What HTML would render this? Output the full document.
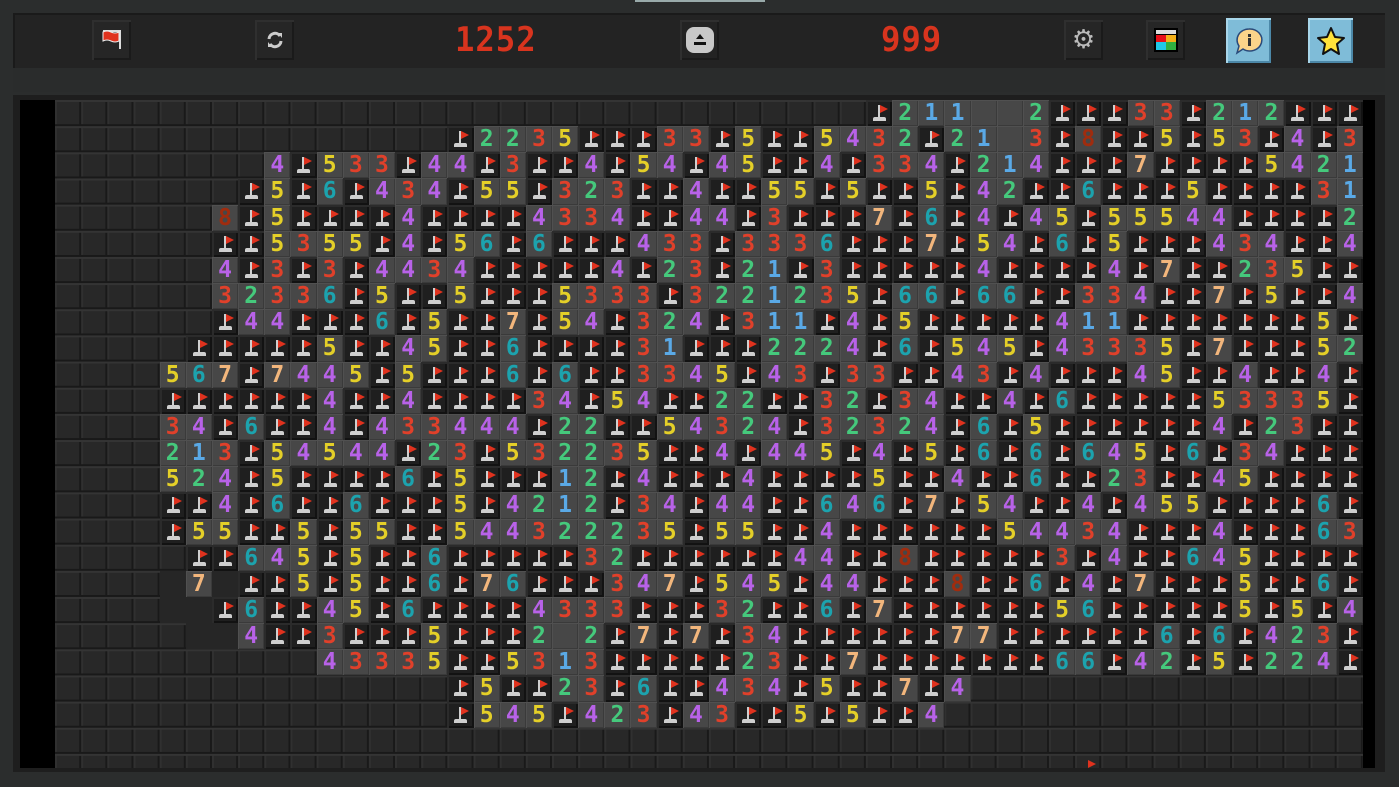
<!DOCTYPE html>
<html><head><meta charset="utf-8"><style>
*{margin:0;padding:0;box-sizing:border-box}
html,body{width:1399px;height:787px;overflow:hidden;background:#2b2d2d;font-family:"Liberation Sans",sans-serif}
.tab{position:absolute;left:635px;top:0;width:130px;height:2px;background:#9aa;}
.tool{position:absolute;left:13px;top:13px;width:1372px;height:55px;background:#232323;border-top:2px solid #1a1a1a;border-left:2px solid #1a1a1a}
.band{position:absolute;left:13px;top:68px;width:1372px;height:24px;background:#2a2c2c}
.btn{position:absolute;top:20px;width:39px;height:40px;background:#262626;box-shadow:inset 2px 2px 0 #2f2f2f,inset -2px -2px 0 #1a1a1a;display:flex;align-items:center;justify-content:center}
.seg{position:absolute;top:20px;height:40px;font-family:"DejaVu Sans Mono",monospace;font-weight:bold;font-size:34px;line-height:40px;color:#d8341e;letter-spacing:1px;transform:scaleX(.95);transform-origin:left}
.panel{position:absolute;left:13px;top:95px;width:1372px;height:677px;background:#1e1e1e}
.blk{position:absolute;left:20px;top:100px;width:35px;height:668px;background:#000}
.blk2{position:absolute;left:1363px;top:100px;width:12px;height:668px;background:#000}
#g{position:absolute;left:55px;top:100px;width:1308px;height:668px;overflow:hidden;
background:linear-gradient(to bottom,#343434 0 2px,transparent 2px 24.16px,#191919 24.16px),linear-gradient(to right,#303030 0 2px,#282828 2px 24.16px,#191919 24.16px);background-size:26.16px 26.16px}
r{display:flex;height:26.16px}
f,e,z,k1,k2,k3,k4,k5,k6,k7,k8{display:block;flex:0 0 26.16px;height:26.16px;position:relative}
f{background:linear-gradient(#cfcfcf,#cfcfcf) 12px 5px/2px 13px no-repeat,#1f1f1f;box-shadow:inset 2px 2px 0 #2b2b2b,inset -2px -2px 0 #121212}
f:before{content:"";position:absolute;left:14px;top:5px;border-left:8px solid #e0321e;border-top:4px solid transparent;border-bottom:4px solid transparent}
f:after{content:"";position:absolute;left:7px;top:17px;width:13px;height:4px;background:#cfcfcf;border-radius:2px 2px 0 0}
e{background:#474747;box-shadow:inset 1px 1px 0 #505050,inset -1px -1px 0 #3a3a3a}
z{background:#262626}
k1,k2,k3,k4,k5,k6,k7,k8{background:#474747;box-shadow:inset 1px 1px 0 #505050,inset -1px -1px 0 #3a3a3a;font-family:"DejaVu Sans Mono",monospace;font-weight:bold;font-size:23px;line-height:26px;text-align:center}
k1,k2,k3,k4,k5,k6,k7,k8{display:flex;justify-content:center}
k1{color:#5aa9e6}k2{color:#45c97c}k3{color:#e0402a}k4{color:#b862e8}k5{color:#e4cf28}k6{color:#1ca3ae}k7{color:#f2b67c}k8{color:#a02c0e}
</style></head><body>
<div class="tab"></div>
<div class="tool"></div>
<div class="band"></div>
<div class="btn" style="left:92px"><svg width="24" height="24" viewBox="0 0 24 24"><path d="M3 3h17v18" fill="none" stroke="#ddd" stroke-width="2"/><path d="M3 4q4-2 8 0t8 0v9q-4 2-8 0t-8 0z" fill="#e0321e" stroke="#eee" stroke-width="1"/></svg></div>
<div class="btn" style="left:255px"><svg width="20" height="20" viewBox="0 0 20 20"><path d="M4 9a6 6 0 0 1 11-3M16 11a6 6 0 0 1-11 3" fill="none" stroke="#ccc" stroke-width="3"/><path d="M13 3l4 0 0 5z M7 17l-4 0 0-5z" fill="#ccc"/></svg></div>
<div class="seg" style="left:455px">1252</div>
<div class="btn" style="left:680px;background:#232323"><svg width="30" height="28" viewBox="0 0 30 28"><rect x="1" y="1" width="28" height="26" rx="8" fill="#c8c8c8"/><path d="M15 8l4 5h-8z" fill="#111"/><rect x="9" y="16" width="12" height="3" fill="#111"/></svg></div>
<div class="seg" style="left:881px">999</div>
<div class="btn" style="left:1064px"><span style="color:#bbb;font-size:26px;font-family:'DejaVu Sans',sans-serif">⚙</span></div>
<div class="btn" style="left:1146px"><svg width="24" height="24" viewBox="0 0 24 24"><rect x="0" y="0" width="24" height="24" fill="#000"/><rect x="2" y="2" width="20" height="4" fill="#ddd"/><rect x="2" y="7" width="10" height="7" fill="#e8101a"/><rect x="12" y="7" width="10" height="7" fill="#f4b018"/><rect x="2" y="14" width="10" height="8" fill="#20c8e8"/><rect x="12" y="14" width="10" height="8" fill="#30b040"/></svg></div>
<div class="btn" style="left:1226px;top:18px;width:45px;height:45px;background:#7fbcd8;box-shadow:inset 2px 2px 0 #a8d6ea,inset -2px -2px 0 #4c88a8"><svg width="30" height="30" viewBox="0 0 30 30"><path d="M15 3a12 11 0 1 1-6 20l-6 4 2-7A12 11 0 0 1 15 3z" fill="#fbd48a" stroke="#2a4a7a" stroke-width="1.5"/><rect x="14" y="8" width="3" height="3" fill="#333"/><rect x="14" y="12" width="3" height="8" fill="#333"/></svg></div>
<div class="btn" style="left:1308px;top:18px;width:45px;height:45px;background:#7fbcd8;box-shadow:inset 2px 2px 0 #a8d6ea,inset -2px -2px 0 #4c88a8"><svg width="30" height="30" viewBox="0 0 30 30"><path d="M15 2l4 9 9 1-7 6 2 10-8-5-8 5 2-10-7-6 9-1z" fill="#ffe23a" stroke="#111" stroke-width="2" stroke-linejoin="round"/></svg></div>
<div class="panel"></div>
<div class="blk"></div>
<div class="blk2"></div>
<div id="g">
<r style="padding-left:810.96px"><f></f><k2>2</k2><k1>1</k1><k1>1</k1><e></e><e></e><k2>2</k2><f></f><f></f><f></f><k3>3</k3><k3>3</k3><f></f><k2>2</k2><k1>1</k1><k2>2</k2><f></f><f></f><f></f></r>
<r style="padding-left:392.4px"><f></f><k2>2</k2><k2>2</k2><k3>3</k3><k5>5</k5><f></f><f></f><f></f><k3>3</k3><k3>3</k3><f></f><k5>5</k5><f></f><f></f><k5>5</k5><k4>4</k4><k3>3</k3><k2>2</k2><f></f><k2>2</k2><k1>1</k1><e></e><k3>3</k3><f></f><k8>8</k8><f></f><f></f><k5>5</k5><f></f><k5>5</k5><k3>3</k3><f></f><k4>4</k4><f></f><k3>3</k3></r>
<r style="padding-left:209.28px"><k4>4</k4><f></f><k5>5</k5><k3>3</k3><k3>3</k3><f></f><k4>4</k4><k4>4</k4><f></f><k3>3</k3><f></f><f></f><k4>4</k4><f></f><k5>5</k5><k4>4</k4><f></f><k4>4</k4><k5>5</k5><f></f><f></f><k4>4</k4><f></f><k3>3</k3><k3>3</k3><k4>4</k4><f></f><k2>2</k2><k1>1</k1><k4>4</k4><f></f><f></f><f></f><k7>7</k7><f></f><f></f><f></f><f></f><k5>5</k5><k4>4</k4><k2>2</k2><k1>1</k1></r>
<r style="padding-left:183.12px"><f></f><k5>5</k5><f></f><k6>6</k6><f></f><k4>4</k4><k3>3</k3><k4>4</k4><f></f><k5>5</k5><k5>5</k5><f></f><k3>3</k3><k2>2</k2><k3>3</k3><f></f><f></f><k4>4</k4><f></f><f></f><k5>5</k5><k5>5</k5><f></f><k5>5</k5><f></f><f></f><k5>5</k5><f></f><k4>4</k4><k2>2</k2><f></f><f></f><k6>6</k6><f></f><f></f><f></f><k5>5</k5><f></f><f></f><f></f><f></f><k3>3</k3><k1>1</k1></r>
<r style="padding-left:156.96px"><k8>8</k8><f></f><k5>5</k5><f></f><f></f><f></f><f></f><k4>4</k4><f></f><f></f><f></f><f></f><k4>4</k4><k3>3</k3><k3>3</k3><k4>4</k4><f></f><f></f><k4>4</k4><k4>4</k4><f></f><k3>3</k3><f></f><f></f><f></f><k7>7</k7><f></f><k6>6</k6><f></f><k4>4</k4><f></f><k4>4</k4><k5>5</k5><f></f><k5>5</k5><k5>5</k5><k5>5</k5><k4>4</k4><k4>4</k4><f></f><f></f><f></f><f></f><k2>2</k2></r>
<r style="padding-left:156.96px"><f></f><f></f><k5>5</k5><k3>3</k3><k5>5</k5><k5>5</k5><f></f><k4>4</k4><f></f><k5>5</k5><k6>6</k6><f></f><k6>6</k6><f></f><f></f><f></f><k4>4</k4><k3>3</k3><k3>3</k3><f></f><k3>3</k3><k3>3</k3><k3>3</k3><k6>6</k6><f></f><f></f><f></f><k7>7</k7><f></f><k5>5</k5><k4>4</k4><f></f><k6>6</k6><f></f><k5>5</k5><f></f><f></f><f></f><k4>4</k4><k3>3</k3><k4>4</k4><f></f><f></f><k4>4</k4></r>
<r style="padding-left:156.96px"><k4>4</k4><f></f><k3>3</k3><f></f><k3>3</k3><f></f><k4>4</k4><k4>4</k4><k3>3</k3><k4>4</k4><f></f><f></f><f></f><f></f><f></f><k4>4</k4><f></f><k2>2</k2><k3>3</k3><f></f><k2>2</k2><k1>1</k1><f></f><k3>3</k3><f></f><f></f><f></f><f></f><f></f><k4>4</k4><f></f><f></f><f></f><f></f><k4>4</k4><f></f><k7>7</k7><f></f><f></f><k2>2</k2><k3>3</k3><k5>5</k5><f></f><f></f></r>
<r style="padding-left:156.96px"><k3>3</k3><k2>2</k2><k3>3</k3><k3>3</k3><k6>6</k6><f></f><k5>5</k5><f></f><f></f><k5>5</k5><f></f><f></f><f></f><k5>5</k5><k3>3</k3><k3>3</k3><k3>3</k3><f></f><k3>3</k3><k2>2</k2><k2>2</k2><k1>1</k1><k2>2</k2><k3>3</k3><k5>5</k5><f></f><k6>6</k6><k6>6</k6><f></f><k6>6</k6><k6>6</k6><f></f><f></f><k3>3</k3><k3>3</k3><k4>4</k4><f></f><f></f><k7>7</k7><f></f><k5>5</k5><f></f><f></f><k4>4</k4></r>
<r style="padding-left:156.96px"><f></f><k4>4</k4><k4>4</k4><f></f><f></f><f></f><k6>6</k6><f></f><k5>5</k5><f></f><f></f><k7>7</k7><f></f><k5>5</k5><k4>4</k4><f></f><k3>3</k3><k2>2</k2><k4>4</k4><f></f><k3>3</k3><k1>1</k1><k1>1</k1><f></f><k4>4</k4><f></f><k5>5</k5><f></f><f></f><f></f><f></f><f></f><k4>4</k4><k1>1</k1><k1>1</k1><f></f><f></f><f></f><f></f><f></f><f></f><f></f><k5>5</k5><f></f></r>
<r style="padding-left:130.8px"><f></f><f></f><f></f><f></f><f></f><k5>5</k5><f></f><f></f><k4>4</k4><k5>5</k5><f></f><f></f><k6>6</k6><f></f><f></f><f></f><f></f><k3>3</k3><k1>1</k1><f></f><f></f><f></f><k2>2</k2><k2>2</k2><k2>2</k2><k4>4</k4><f></f><k6>6</k6><f></f><k5>5</k5><k4>4</k4><k5>5</k5><f></f><k4>4</k4><k3>3</k3><k3>3</k3><k3>3</k3><k5>5</k5><f></f><k7>7</k7><f></f><f></f><f></f><k5>5</k5><k2>2</k2></r>
<r style="padding-left:104.64px"><k5>5</k5><k6>6</k6><k7>7</k7><f></f><k7>7</k7><k4>4</k4><k4>4</k4><k5>5</k5><f></f><k5>5</k5><f></f><f></f><f></f><k6>6</k6><f></f><k6>6</k6><f></f><f></f><k3>3</k3><k3>3</k3><k4>4</k4><k5>5</k5><f></f><k4>4</k4><k3>3</k3><f></f><k3>3</k3><k3>3</k3><f></f><f></f><k4>4</k4><k3>3</k3><f></f><k4>4</k4><f></f><f></f><f></f><k4>4</k4><k5>5</k5><f></f><f></f><k4>4</k4><f></f><f></f><k4>4</k4><f></f></r>
<r style="padding-left:104.64px"><f></f><f></f><f></f><f></f><f></f><f></f><k4>4</k4><f></f><f></f><k4>4</k4><f></f><f></f><f></f><f></f><k3>3</k3><k4>4</k4><f></f><k5>5</k5><k4>4</k4><f></f><f></f><k2>2</k2><k2>2</k2><f></f><f></f><k3>3</k3><k2>2</k2><f></f><k3>3</k3><k4>4</k4><f></f><f></f><k4>4</k4><f></f><k6>6</k6><f></f><f></f><f></f><f></f><f></f><k5>5</k5><k3>3</k3><k3>3</k3><k3>3</k3><k5>5</k5><f></f></r>
<r style="padding-left:104.64px"><k3>3</k3><k4>4</k4><f></f><k6>6</k6><f></f><f></f><k4>4</k4><f></f><k4>4</k4><k3>3</k3><k3>3</k3><k4>4</k4><k4>4</k4><k4>4</k4><f></f><k2>2</k2><k2>2</k2><f></f><f></f><k5>5</k5><k4>4</k4><k3>3</k3><k2>2</k2><k4>4</k4><f></f><k3>3</k3><k2>2</k2><k3>3</k3><k2>2</k2><k4>4</k4><f></f><k6>6</k6><f></f><k5>5</k5><f></f><f></f><f></f><f></f><f></f><f></f><k4>4</k4><f></f><k2>2</k2><k3>3</k3><f></f><f></f></r>
<r style="padding-left:104.64px"><k2>2</k2><k1>1</k1><k3>3</k3><f></f><k5>5</k5><k4>4</k4><k5>5</k5><k4>4</k4><k4>4</k4><f></f><k2>2</k2><k3>3</k3><f></f><k5>5</k5><k3>3</k3><k2>2</k2><k2>2</k2><k3>3</k3><k5>5</k5><f></f><f></f><k4>4</k4><f></f><k4>4</k4><k4>4</k4><k5>5</k5><f></f><k4>4</k4><f></f><k5>5</k5><f></f><k6>6</k6><f></f><k6>6</k6><f></f><k6>6</k6><k4>4</k4><k5>5</k5><f></f><k6>6</k6><f></f><k3>3</k3><k4>4</k4><f></f><f></f><f></f></r>
<r style="padding-left:104.64px"><k5>5</k5><k2>2</k2><k4>4</k4><f></f><k5>5</k5><f></f><f></f><f></f><f></f><k6>6</k6><f></f><k5>5</k5><f></f><f></f><f></f><k1>1</k1><k2>2</k2><f></f><k4>4</k4><f></f><f></f><f></f><k4>4</k4><f></f><f></f><f></f><f></f><k5>5</k5><f></f><f></f><k4>4</k4><f></f><f></f><k6>6</k6><f></f><f></f><k2>2</k2><k3>3</k3><f></f><f></f><k4>4</k4><k5>5</k5><f></f><f></f><f></f><f></f></r>
<r style="padding-left:104.64px"><f></f><f></f><k4>4</k4><f></f><k6>6</k6><f></f><f></f><k6>6</k6><f></f><f></f><f></f><k5>5</k5><f></f><k4>4</k4><k2>2</k2><k1>1</k1><k2>2</k2><f></f><k3>3</k3><k4>4</k4><f></f><k4>4</k4><k4>4</k4><f></f><f></f><k6>6</k6><k4>4</k4><k6>6</k6><f></f><k7>7</k7><f></f><k5>5</k5><k4>4</k4><f></f><f></f><k4>4</k4><f></f><k4>4</k4><k5>5</k5><k5>5</k5><f></f><f></f><f></f><f></f><k6>6</k6><f></f></r>
<r style="padding-left:104.64px"><f></f><k5>5</k5><k5>5</k5><f></f><f></f><k5>5</k5><f></f><k5>5</k5><k5>5</k5><f></f><f></f><k5>5</k5><k4>4</k4><k4>4</k4><k3>3</k3><k2>2</k2><k2>2</k2><k2>2</k2><k3>3</k3><k5>5</k5><f></f><k5>5</k5><k5>5</k5><f></f><f></f><k4>4</k4><f></f><f></f><f></f><f></f><f></f><f></f><k5>5</k5><k4>4</k4><k4>4</k4><k3>3</k3><k4>4</k4><f></f><f></f><f></f><k4>4</k4><f></f><f></f><f></f><k6>6</k6><k3>3</k3></r>
<r style="padding-left:130.8px"><f></f><f></f><k6>6</k6><k4>4</k4><k5>5</k5><f></f><k5>5</k5><f></f><f></f><k6>6</k6><f></f><f></f><f></f><f></f><f></f><k3>3</k3><k2>2</k2><f></f><f></f><f></f><f></f><f></f><f></f><k4>4</k4><k4>4</k4><f></f><f></f><k8>8</k8><f></f><f></f><f></f><f></f><f></f><k3>3</k3><f></f><k4>4</k4><f></f><f></f><k6>6</k6><k4>4</k4><k5>5</k5><f></f><f></f><f></f><f></f></r>
<r style="padding-left:104.64px"><z></z><k7>7</k7><z></z><f></f><f></f><k5>5</k5><f></f><k5>5</k5><f></f><f></f><k6>6</k6><f></f><k7>7</k7><k6>6</k6><f></f><f></f><f></f><k3>3</k3><k4>4</k4><k7>7</k7><f></f><k5>5</k5><k4>4</k4><k5>5</k5><f></f><k4>4</k4><k4>4</k4><f></f><f></f><f></f><k8>8</k8><f></f><f></f><k6>6</k6><f></f><k4>4</k4><f></f><k7>7</k7><f></f><f></f><f></f><k5>5</k5><f></f><f></f><k6>6</k6><f></f></r>
<r style="padding-left:104.64px"><z></z><z></z><f></f><k6>6</k6><f></f><f></f><k4>4</k4><k5>5</k5><f></f><k6>6</k6><f></f><f></f><f></f><f></f><k4>4</k4><k3>3</k3><k3>3</k3><k3>3</k3><f></f><f></f><f></f><k3>3</k3><k2>2</k2><f></f><f></f><k6>6</k6><f></f><k7>7</k7><f></f><f></f><f></f><f></f><f></f><f></f><k5>5</k5><k6>6</k6><f></f><f></f><f></f><f></f><f></f><k5>5</k5><f></f><k5>5</k5><f></f><k4>4</k4></r>
<r style="padding-left:130.8px"><z></z><z></z><k4>4</k4><f></f><f></f><k3>3</k3><f></f><f></f><f></f><k5>5</k5><f></f><f></f><f></f><k2>2</k2><e></e><k2>2</k2><f></f><k7>7</k7><f></f><k7>7</k7><f></f><k3>3</k3><k4>4</k4><f></f><f></f><f></f><f></f><f></f><f></f><k7>7</k7><k7>7</k7><f></f><f></f><f></f><f></f><f></f><f></f><k6>6</k6><f></f><k6>6</k6><f></f><k4>4</k4><k2>2</k2><k3>3</k3><f></f></r>
<r style="padding-left:261.6px"><k4>4</k4><k3>3</k3><k3>3</k3><k3>3</k3><k5>5</k5><f></f><f></f><k5>5</k5><k3>3</k3><k1>1</k1><k3>3</k3><f></f><f></f><f></f><f></f><f></f><k2>2</k2><k3>3</k3><f></f><f></f><k7>7</k7><f></f><f></f><f></f><f></f><f></f><f></f><f></f><k6>6</k6><k6>6</k6><f></f><k4>4</k4><k2>2</k2><f></f><k5>5</k5><f></f><k2>2</k2><k2>2</k2><k4>4</k4><f></f></r>
<r style="padding-left:392.4px"><f></f><k5>5</k5><f></f><f></f><k2>2</k2><k3>3</k3><f></f><k6>6</k6><f></f><f></f><k4>4</k4><k3>3</k3><k4>4</k4><f></f><k5>5</k5><f></f><f></f><k7>7</k7><f></f><k4>4</k4></r>
<r style="padding-left:392.4px"><f></f><k5>5</k5><k4>4</k4><k5>5</k5><f></f><k4>4</k4><k2>2</k2><k3>3</k3><f></f><k4>4</k4><k3>3</k3><f></f><f></f><k5>5</k5><f></f><k5>5</k5><f></f><f></f><k4>4</k4></r>
</div>
<div style="position:absolute;left:1088px;top:760px;border-left:8px solid #e0321e;border-top:4px solid transparent;border-bottom:4px solid transparent"></div>
</body></html>
